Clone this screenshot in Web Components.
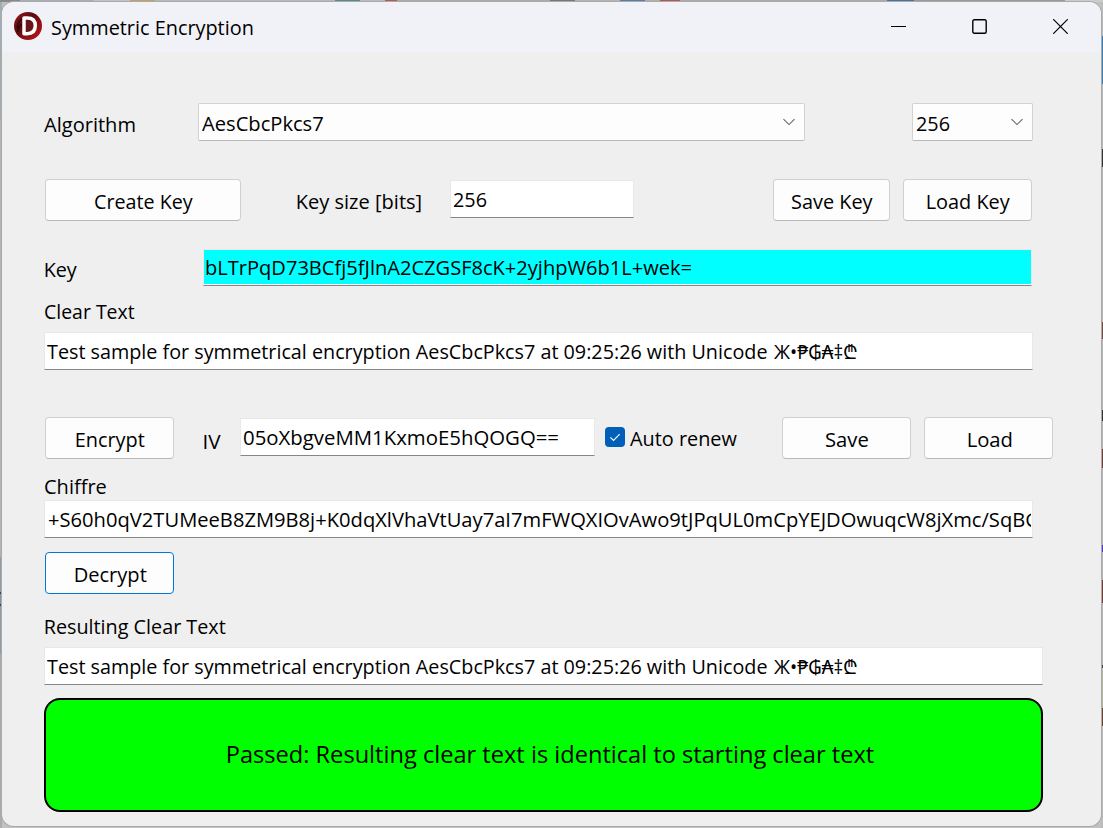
<!DOCTYPE html>
<html lang="en">
<head>
<meta charset="utf-8">
<title>Symmetric Encryption</title>
<style>
html,body{margin:0;width:1103px;height:828px;overflow:hidden}
body{font-family:"Open Sans","Noto Sans","DejaVu Sans",sans-serif;color:#000}
</style>
</head>
<body>
<encryption-app></encryption-app>
<script>
const define = (name, html, extra = {}) => {
  const t = document.createElement('template');
  t.innerHTML = html;
  customElements.define(name, class extends HTMLElement {
    constructor() {
      super();
      this.attachShadow({ mode: 'open' }).append(t.content.cloneNode(true));
    }
    connectedCallback() { if (extra.connected) extra.connected.call(this); }
  });
};
const spaced = function () {
  if (this.hasAttribute('x')) this.style.marginLeft = this.getAttribute('x') + 'px';
  if (this.hasAttribute('y')) this.style.marginTop = this.getAttribute('y') + 'px';
  if (this.hasAttribute('w')) this.style.width = this.getAttribute('w') + 'px';
  if (this.hasAttribute('h')) this.style.height = this.getAttribute('h') + 'px';
};

/* Text run whose drawn width follows its "w" attribute. */
const pen = document.createElement('canvas').getContext('2d');
define('ui-text', `<style>
:host{display:block;flex:none;height:28px;line-height:28px;white-space:pre;font-size:20.5px}
span{display:inline-block;transform-origin:0 50%}
</style><span><slot></slot></span>`, { connected() {
  spaced.call(this);
  const size = +(this.getAttribute('size') || 20.5);
  this.style.fontSize = size + 'px';
  pen.font = size + 'px "Open Sans","Noto Sans","DejaVu Sans",sans-serif';
  const m = pen.measureText(this.textContent);
  /* Letters with a side bearing start one pixel further in. */
  const inset = /^[AT+Ж]/.test(this.textContent) ? 0 : /^[KRDELIP]/.test(this.textContent) ? 1.6 : 1;
  const k = (+this.getAttribute('w') - inset * .7) / (m.actualBoundingBoxRight + m.actualBoundingBoxLeft);
  this.shadowRoot.querySelector('span').style.transform =
    `translateX(${m.actualBoundingBoxLeft * k + inset}px) scaleX(${k})`;
} });

define('ui-row', `<style>
:host{display:flex;align-items:flex-start;flex:none}
</style><slot></slot>`, { connected: spaced });

define('ui-button', `<style>
:host{display:flex;flex:none;box-sizing:border-box;height:42px;justify-content:center;padding-top:7px;background:#fdfdfd;border:1px solid #d0d0d0;border-bottom-color:#b9b9b9;border-radius:4px}
:host([focused]){border-color:#0078d4}
</style><slot></slot>`, { connected: spaced });

define('ui-input', `<style>
:host{display:block;flex:none;box-sizing:border-box;height:38px;background:#fff;border:1px solid #e8e8e8;border-bottom-color:#868686;overflow:hidden}
:host([marked]) .in{background:#0ff}
.in{display:flex;align-items:flex-start;height:100%;margin-right:1px;padding-left:2px;padding-top:4px;box-sizing:border-box;overflow:hidden}
:host([marked]){height:37px}
:host([marked]) .in{height:34px;margin:0;padding-left:1px;padding-top:3px}
</style><div class="in"><slot></slot></div>`, { connected: spaced });

define('ui-select', `<style>
:host{display:flex;flex:none;box-sizing:border-box;height:38px;justify-content:space-between;padding:5px 9px 0 3px;background:#fdfdfd;border:1px solid #d2d2d2;border-bottom-color:#b8b8b8;border-radius:2px}
svg{display:block;margin-top:9px}
</style><slot></slot><svg width="12" height="8" viewBox="0 0 12 8" fill="none" stroke="#686868" stroke-width="1.1"><path d="M.5 1.2 6 6.6 11.5 1.2"/></svg>`, { connected: spaced });

define('ui-checkbox', `<style>
:host{display:flex;flex:none;align-items:flex-start}
svg{display:block;margin-top:3px}
</style><svg width="20" height="20" viewBox="0 0 20 20"><rect width="20" height="20" rx="4" fill="#005fb8"/><path d="M5.4 10.4 8.5 13.5 14.7 7.2" fill="none" stroke="#fff" stroke-width="1.1"/></svg><slot></slot>`, { connected: spaced });

define('ui-banner', `<style>
:host{display:flex;flex:none;box-sizing:border-box;align-items:flex-start;background:#0f0;border:2px solid #000;border-radius:16px}
</style><slot></slot>`, { connected: spaced });

define('app-logo', `<style>:host{display:block;flex:none;width:28px;height:28px}svg{display:block}</style>
<svg width="28" height="28" viewBox="0 0 28 28"><defs><linearGradient id="g" x1="0" y1="0" x2="1" y2="1"><stop offset="0" stop-color="#9b161b"/><stop offset=".4" stop-color="#5a0b10"/><stop offset=".65" stop-color="#8e1016"/><stop offset="1" stop-color="#c4141b"/></linearGradient></defs>
<circle cx="14" cy="14" r="14" fill="url(#g)"/><path d="M3 16Q4 9 8 7M4 20Q4 14 8 12" stroke="#310609" stroke-width="1.6" fill="none"/>
<path d="M10 6H13.2C19.2 6 21.3 9.2 21.3 13.6 21.3 18.7 18.6 21.8 13 21.8H10Z" fill="#69151a" stroke="#fff" stroke-width="3.5" stroke-linejoin="round"/></svg>`);

define('title-bar', `<style>
:host{display:flex;flex:none;height:50px;background:#f1f2f8;align-items:flex-start}
app-logo{margin:10px 0 0 12px}
.buttons{display:flex;margin:17px 33px 0 auto;gap:66px}
svg{display:block}
</style><app-logo></app-logo><slot></slot>
<div class="buttons">
<svg width="15" height="15" fill="none" stroke="#000"><path d="M0 7.5H15"/></svg>
<svg width="15" height="15" fill="none" stroke="#000" stroke-width="1.4"><rect x=".8" y=".8" width="13.4" height="13.4" rx="1.5"/></svg>
<svg width="15" height="15" fill="none" stroke="#000" stroke-width="1.2"><path d="M.2.2 14.8 14.8M14.8.2.2 14.8"/></svg>
</div>`);

define('app-window', `<style>
:host{display:flex;flex-direction:column;box-sizing:border-box;width:1099px;height:824px;background:#efefef;border-radius:12px;overflow:hidden;box-shadow:0 0 0 1px #aaa}
</style><slot></slot>`);

define('encryption-app', `<style>
:host{display:block;box-sizing:border-box;width:1103px;height:828px;padding:2px;background:
linear-gradient(90deg,#888 0 20px,#a7adb2 20px 94px,#c2c5c8 94px 130px,#c3a066 130px 155px,#b4b7bb 155px 335px,#5c8a8c 335px 360px,#b9bbbd 360px 385px,#b65a50 385px 397px,#aaa 397px 550px,#777 550px 575px,#b5b5b5 575px 620px,#5a7da5 620px 645px,#b0b0b0 645px 660px,#b55 660px 680px,#aaa 680px 887px,#4a719e 887px 914px,#999 914px 1065px,#ccc 1065px) 0 0/1103px 2px no-repeat,
linear-gradient(#a0adb5 0 120px,#b3b3b3 120px 557px,#8d9aa8 557px 592px,#304a50 592px 594px,#7899a2 594px 604px,#304a50 604px 606px,#8d9aa8 606px 654px,#acacac 654px) 0 0/2px 828px no-repeat,
linear-gradient(#bbb 0 36px,#397cad 36px 84px,#b8b8b8 84px 149px,#343434 149px 167px,#b5b5b5 167px 322px,#6d4a42 322px 339px,#b5b5b5 339px 410px,#333 410px 421px,#b5b5b5 421px 449px,#6b4038 449px 468px,#b5b5b5 468px 545px,#5238b8 545px 552px,#b5b5b5 552px 580px,#6b4038 580px 603px,#b5b5b5 603px 665px,#444 665px 668px,#b4b3a2 668px 708px,#644538 708px 726px,#bbb 726px) 1101px 0/2px 828px no-repeat,#c1c1c1}
</style>
<app-window>
<title-bar><ui-text x="9" y="11" w="201">Symmetric Encryption</ui-text></title-bar>
<ui-row y="51" h="38"><ui-text x="42" y="7" w="91">Algorithm</ui-text><ui-select x="63" w="607"><ui-text w="121">AesCbcPkcs7</ui-text></ui-select><ui-select x="107" w="121"><ui-text w="33">256</ui-text></ui-select></ui-row>
<ui-row y="38" h="42"><ui-button x="43" w="196"><ui-text w="99">Create Key</ui-text></ui-button><ui-text x="55" y="8" w="125">Key size [bits]</ui-text><ui-input x="29" y="1" w="184"><ui-text w="33">256</ui-text></ui-input><ui-button x="139" w="117"><ui-text w="82">Save Key</ui-text></ui-button><ui-button x="13" w="129"><ui-text w="84">Load Key</ui-text></ui-button></ui-row>
<ui-row y="28" h="37"><ui-text x="42" y="6" w="33">Key</ui-text><ui-input marked x="126" w="829"><ui-text w="486">bLTrPqD73BCfj5fJlnA2CZGSF8cK+2yjhpW6b1L+wek=</ui-text></ui-input></ui-row>
<ui-text x="42" y="11" w="90">Clear Text</ui-text>
<ui-input x="42" y="7" w="989"><ui-text w="720">Test sample for symmetrical encryption AesCbcPkcs7 at 09:25:26 with Unicode</ui-text><ui-text x="7" w="83">Ж•₱₲₳‡₾</ui-text></ui-input>
<ui-row y="47" h="42"><ui-button x="43" w="129"><ui-text w="69">Encrypt</ui-text></ui-button><ui-text x="29" y="10" w="18">IV</ui-text><ui-input x="19" y="1" w="355"><ui-text w="315">05oXbgveMM1KxmoE5hQOGQ==</ui-text></ui-input><ui-checkbox x="10" y="7"><ui-text x="5" w="107">Auto renew</ui-text></ui-checkbox><ui-button x="45" w="129"><ui-text w="43">Save</ui-text></ui-button><ui-button x="13" w="129"><ui-text w="44">Load</ui-text></ui-button></ui-row>
<ui-text x="42" y="13" w="62">Chiffre</ui-text>
<ui-input x="42" w="989"><ui-text x="2" w="990">+S60h0qV2TUMeeB8ZM9B8j+K0dqXlVhaVtUay7aI7mFWQXIOvAwo9tJPqUL0mCpYEJDOwuqcW8jXmc/SqBG</ui-text></ui-input>
<ui-button focused x="43" y="14" w="129"><ui-text w="72">Decrypt</ui-text></ui-button>
<ui-text x="42" y="18" w="181">Resulting Clear Text</ui-text>
<ui-input x="42" y="7" w="999"><ui-text w="720">Test sample for symmetrical encryption AesCbcPkcs7 at 09:25:26 with Unicode</ui-text><ui-text x="7" w="83">Ж•₱₲₳‡₾</ui-text></ui-input>
<ui-banner x="42" y="13" w="999" h="114"><ui-text x="180" y="40" w="648" size="24.5">Passed: Resulting clear text is identical to starting clear text</ui-text></ui-banner>
</app-window>`);
</script>
</body>
</html>
